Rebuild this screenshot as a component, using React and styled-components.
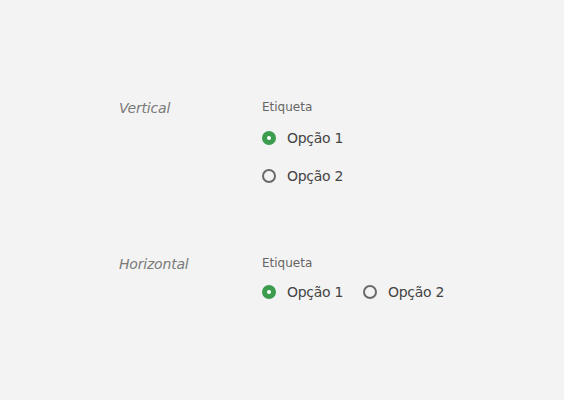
import React from "react";
import styled, { createGlobalStyle } from "styled-components";

const Global = createGlobalStyle`
  html, body { margin: 0; padding: 0; background: #f3f3f3; }
  body { font-family: "DejaVu Sans", "Noto Sans", sans-serif; }
`;

const Page = styled.div`
  width: 564px;
  height: 400px;
  box-sizing: border-box;
  padding: 99px 0 0 119px;
  display: flex;
  flex-direction: column;
  gap: 70px;
`;

const Row = styled.div`
  display: grid;
  grid-template-columns: 143px 1fr;
  align-items: start;
`;

const RowLabel = styled.div`
  font-style: italic;
  font-size: 14px;
  line-height: 18px;
  color: #7a7a7a;
  letter-spacing: -0.2px;
`;

const Field = styled.div`
  display: flex;
  flex-direction: column;
`;

const Legend = styled.div`
  font-size: 12px;
  line-height: 16px;
  color: #666;
  margin-bottom: ${(p) => p.$gap}px;
`;

const Options = styled.div`
  display: flex;
  flex-direction: ${(p) => (p.$horizontal ? "row" : "column")};
  gap: 20px;
`;

const Option = styled.label`
  display: flex;
  align-items: center;
  gap: 11px;
  height: 18px;
  font-size: 14px;
  color: #444;
  letter-spacing: -0.3px;
`;

const Dot = styled.span`
  width: 14px;
  height: 14px;
  box-sizing: border-box;
  border-radius: 50%;
  border: 2px solid ${(p) => (p.$checked ? "#3c9d4e" : "#6a6a6a")};
  background: ${(p) => (p.$checked ? "#3c9d4e" : "transparent")};
  display: flex;
  align-items: center;
  justify-content: center;
  flex: none;
  &::after {
    content: "";
    display: ${(p) => (p.$checked ? "block" : "none")};
    width: 4px;
    height: 4px;
    border-radius: 50%;
    background: #fff;
  }
`;

function Group({ horizontal }) {
  return (
    <Field>
      <Legend $gap={horizontal ? 12 : 14}>Etiqueta</Legend>
      <Options $horizontal={horizontal}>
        <Option>
          <Dot $checked />
          Opção 1
        </Option>
        <Option>
          <Dot />
          Opção 2
        </Option>
      </Options>
    </Field>
  );
}

export default function App() {
  return (
    <>
      <Global />
      <Page>
        <Row>
          <RowLabel>Vertical</RowLabel>
          <Group />
        </Row>
        <Row>
          <RowLabel>Horizontal</RowLabel>
          <Group horizontal />
        </Row>
      </Page>
    </>
  );
}
